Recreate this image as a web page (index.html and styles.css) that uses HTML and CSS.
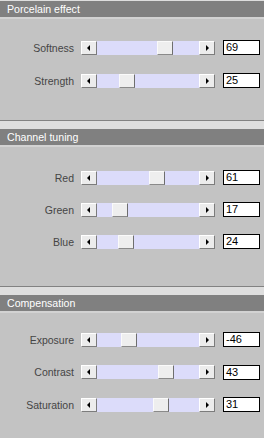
FILE: index.html
```html
<!DOCTYPE html>
<html lang="en">
<head>
    <meta charset="UTF-8">
    <title>Effect settings</title>
    <link rel="stylesheet" href="styles.css">
</head>
<body>
    <div class="panel">
        <section class="group group-first">
            <h2 class="group-title">Porcelain effect</h2>
            <div class="group-body body-porcelain">
                <div class="row">
                    <span class="row-label">Softness</span>
                    <div class="slider">
                        <span class="slider-btn btn-left"></span>
                        <div class="slider-track"><span class="slider-thumb" style="left:60px"></span></div>
                        <span class="slider-btn btn-right"></span>
                    </div>
                    <div class="row-value">69</div>
                </div>
                <div class="row">
                    <span class="row-label">Strength</span>
                    <div class="slider">
                        <span class="slider-btn btn-left"></span>
                        <div class="slider-track"><span class="slider-thumb" style="left:22px"></span></div>
                        <span class="slider-btn btn-right"></span>
                    </div>
                    <div class="row-value">25</div>
                </div>
            </div>
        </section>

        <section class="group">
            <h2 class="group-title">Channel tuning</h2>
            <div class="group-body body-channel">
                <div class="row">
                    <span class="row-label">Red</span>
                    <div class="slider">
                        <span class="slider-btn btn-left"></span>
                        <div class="slider-track"><span class="slider-thumb" style="left:52px"></span></div>
                        <span class="slider-btn btn-right"></span>
                    </div>
                    <div class="row-value">61</div>
                </div>
                <div class="row">
                    <span class="row-label">Green</span>
                    <div class="slider">
                        <span class="slider-btn btn-left"></span>
                        <div class="slider-track"><span class="slider-thumb" style="left:15px"></span></div>
                        <span class="slider-btn btn-right"></span>
                    </div>
                    <div class="row-value">17</div>
                </div>
                <div class="row">
                    <span class="row-label">Blue</span>
                    <div class="slider">
                        <span class="slider-btn btn-left"></span>
                        <div class="slider-track"><span class="slider-thumb" style="left:21px"></span></div>
                        <span class="slider-btn btn-right"></span>
                    </div>
                    <div class="row-value">24</div>
                </div>
            </div>
        </section>

        <section class="group">
            <h2 class="group-title">Compensation</h2>
            <div class="group-body body-compensation">
                <div class="row">
                    <span class="row-label">Exposure</span>
                    <div class="slider">
                        <span class="slider-btn btn-left"></span>
                        <div class="slider-track"><span class="slider-thumb" style="left:24px"></span></div>
                        <span class="slider-btn btn-right"></span>
                    </div>
                    <div class="row-value">-46</div>
                </div>
                <div class="row">
                    <span class="row-label">Contrast</span>
                    <div class="slider">
                        <span class="slider-btn btn-left"></span>
                        <div class="slider-track"><span class="slider-thumb" style="left:61px"></span></div>
                        <span class="slider-btn btn-right"></span>
                    </div>
                    <div class="row-value">43</div>
                </div>
                <div class="row">
                    <span class="row-label">Saturation</span>
                    <div class="slider">
                        <span class="slider-btn btn-left"></span>
                        <div class="slider-track"><span class="slider-thumb" style="left:56px"></span></div>
                        <span class="slider-btn btn-right"></span>
                    </div>
                    <div class="row-value">31</div>
                </div>
            </div>
        </section>
    </div>
</body>
</html>
```

FILE: styles.css
```css
body {
    margin: 0;
    background: #c3c3c3;
    font-family: "Liberation Sans", Arial, sans-serif;
    font-size: 10.5px;
    color: #454545;
}
.panel {
    width: 264px;
    height: 438px;
    overflow: hidden;
}
.group {
    border-top: 1px solid #828282;
}
.group-first {
    border-top: none;
}
.group-title {
    margin: 0;
    height: 16px;
    line-height: 16px;
    padding-left: 7px;
    background: #808080;
    color: #fff;
    font-size: 10.6px;
    font-weight: normal;
    border-top: 8px solid #dedede;
    border-bottom: 2px solid #d2d2d2;
}
.group-first .group-title {
    border-top-width: 1px;
}
.group-body {
    display: flex;
    flex-direction: column;
}
.body-porcelain { padding: 21px 0 32px; gap: 18px; }
.body-channel { padding: 23px 0 37px; gap: 17px; }
.body-compensation { padding: 19px 0 26px; gap: 17.5px; }

.row {
    display: flex;
    align-items: center;
    height: 15px;
}
.row-label {
    width: 74px;
    margin-right: 7px;
    text-align: right;
}
.slider {
    display: flex;
    width: 134px;
    height: 14px;
    margin-right: 8px;
}
.slider-btn {
    position: relative;
    width: 16px;
    height: 14px;
    box-sizing: border-box;
    background: #ececec;
    border: 1px solid;
    border-color: #fff #7c7c7c #7c7c7c #fff;
}
.slider-btn::before {
    content: "";
    position: absolute;
    top: 3px;
    border-top: 3px solid transparent;
    border-bottom: 3px solid transparent;
}
.btn-left::before {
    left: 5px;
    border-right: 3px solid #000;
}
.btn-right::before {
    left: 6px;
    border-left: 3px solid #000;
}
.slider-track {
    position: relative;
    flex: 1;
    background: #dcdcfa;
}
.slider-thumb {
    position: absolute;
    top: 0;
    width: 16px;
    height: 14px;
    box-sizing: border-box;
    background: #eeeeee;
    border: 1px solid;
    border-color: #fafafa #6e6e6e #8a8a8a #fafafa;
}
.row-value {
    width: 37px;
    height: 15px;
    box-sizing: border-box;
    background: #fff;
    border: 1px solid #000;
    padding-left: 2px;
    line-height: 13px;
    font-size: 11px;
    color: #000;
}
```
